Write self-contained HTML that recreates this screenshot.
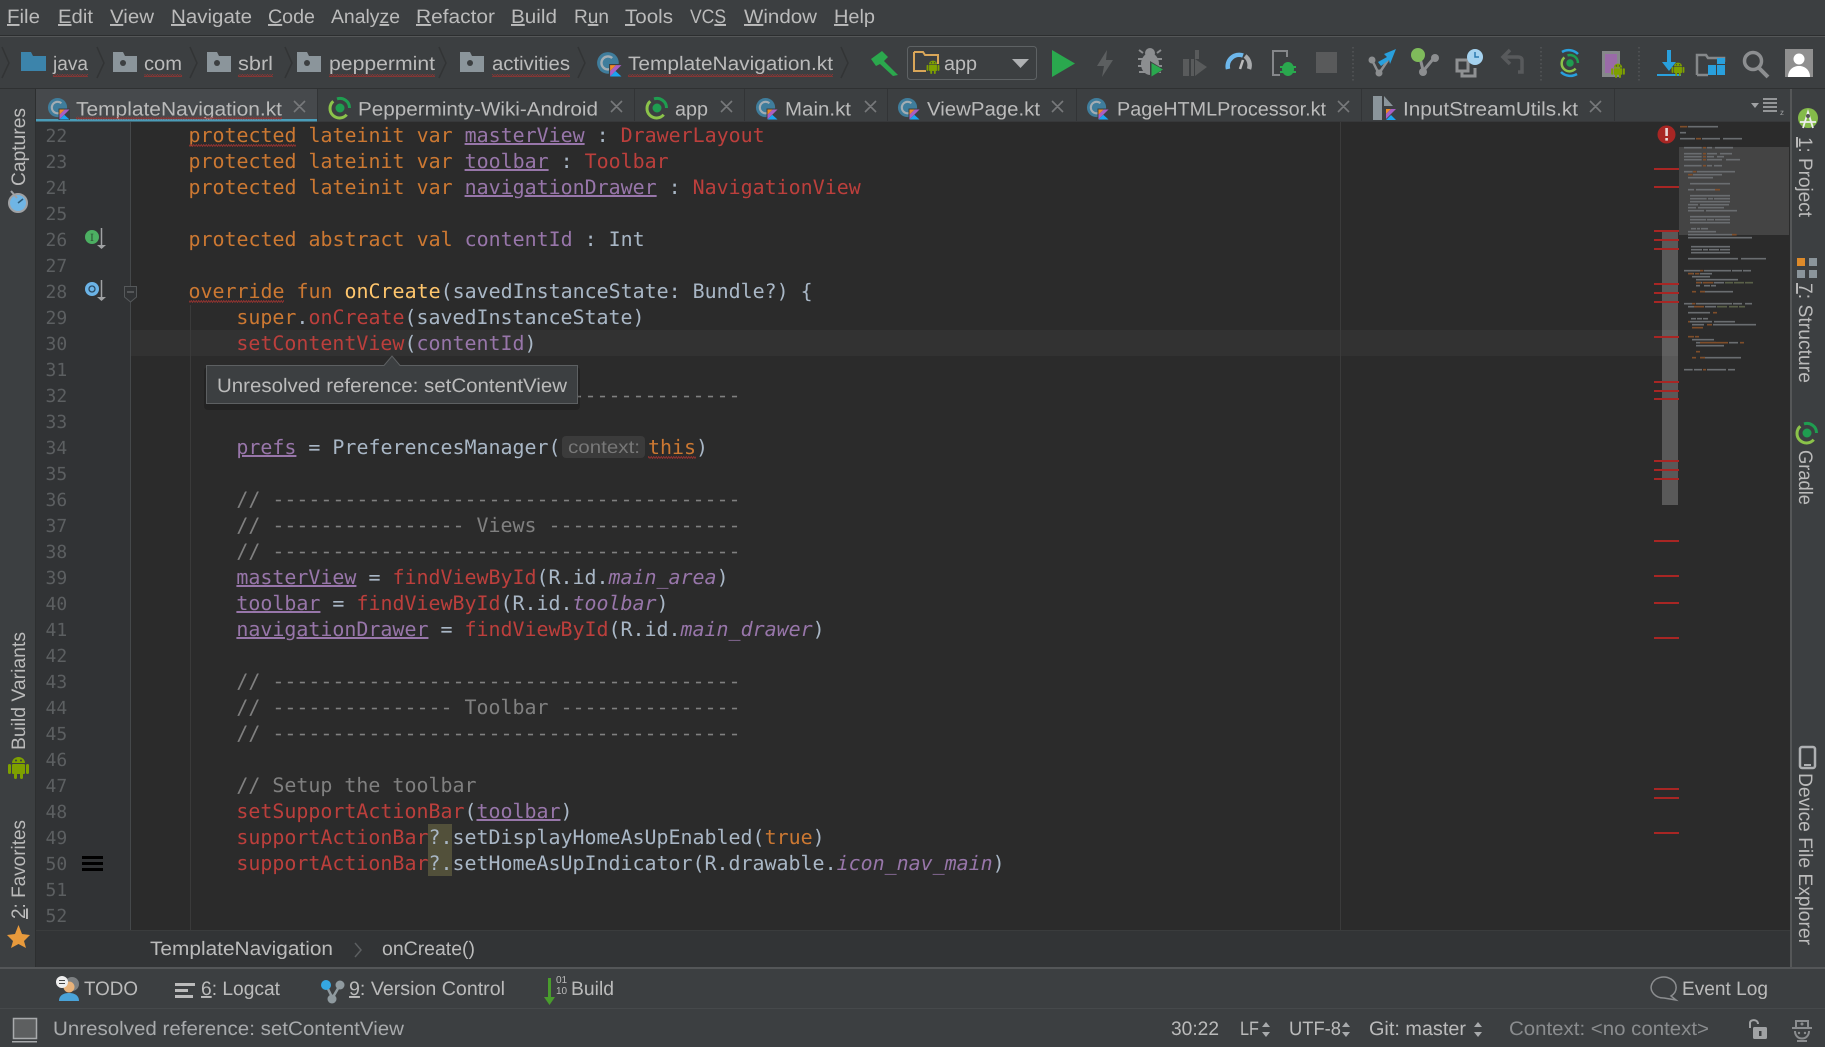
<!DOCTYPE html>
<html><head><meta charset="utf-8"><title>TemplateNavigation.kt</title>
<style>
html,body{margin:0;padding:0;background:#3c3f41;overflow:hidden;width:1825px;height:1047px}
svg{display:block;text-rendering:geometricPrecision}
.u{font-family:"Liberation Sans",sans-serif;font-size:19.5px;fill:#bbbbbb}
.c{font-family:"DejaVu Sans Mono","Liberation Mono",monospace;font-size:19.95px;fill:#a9b7c6}
.n{font-family:"DejaVu Sans Mono","Liberation Mono",monospace;font-size:18px;fill:#5c5f61}
.k{fill:#cc7832}.p{fill:#9876aa}.r{fill:#bc3f3c}.f{fill:#ffc66d}.m{fill:#808080}
.i{font-style:italic;fill:#9876aa}.ul{text-decoration:underline}
.x{stroke:#77797b;stroke-width:1.6;fill:none}
</style></head><body>
<svg xmlns="http://www.w3.org/2000/svg" width="1825" height="1047" viewBox="0 0 1825 1047">
<defs>
<pattern id="wave" width="5" height="3" patternUnits="userSpaceOnUse"><path d="M0 2.500L1.250 .5 2.500 2.500 3.750 .5 5 2.500" fill="none" stroke="#9c3330" stroke-width=".8"/></pattern>
<symbol id="kt" viewBox="0 0 24 24"><circle cx="11" cy="11" r="10" fill="#3f7d9c"/><path d="M15 6.500A6 6 0 1 0 15 15.500" fill="none" stroke="#a3adb3" stroke-width="2.200"/><rect x="12" y="12" width="12" height="12" fill="#3c3f41"/><polygon points="13,13 18.500,13 13,18.500" fill="#f08a24"/><polygon points="18.500,13 23.500,13 13,23.500 13,18.500" fill="#a85fc4"/><polygon points="13,23.500 18,18.500 23.500,23.500" fill="#1ba4ef"/></symbol>
<symbol id="gr" viewBox="0 0 24 24"><path d="M18.700 18.700A9.500 9.500 0 1 1 5.300 5.300" fill="none" stroke="#8bc34a" stroke-width="3"/><path d="M9 2.900A9.500 9.500 0 0 1 21.500 12" fill="none" stroke="#1f9d50" stroke-width="3"/><circle cx="12" cy="12" r="4.500" fill="#1f9d50"/></symbol>
<symbol id="fd" viewBox="0 0 24 20"><path d="M0 0H10L12 4H24V20H0Z" fill="#8b959b"/><circle cx="10" cy="11" r="3" fill="#3c3f41"/></symbol>
<symbol id="and" viewBox="0 0 21 23"><rect x="4" y="8" width="13" height="10" rx="1" fill="#7ea000"/><path d="M4 7a6.500 6 0 0 1 13 0Z" fill="#7ea000"/><rect y="8" width="3" height="10" rx="1.500" fill="#7ea000"/><rect x="18" y="8" width="3" height="10" rx="1.500" fill="#7ea000"/><rect x="6" y="17" width="3" height="6" rx="1.500" fill="#7ea000"/><rect x="12" y="17" width="3" height="6" rx="1.500" fill="#7ea000"/><circle cx="8" cy="4.500" r="1" fill="#3c3f41"/><circle cx="13" cy="4.500" r="1" fill="#3c3f41"/></symbol>
</defs>

<!-- base -->
<rect width="1825" height="1047" fill="#3c3f41"/>

<!-- menu -->
<g>
<text class="u" x="7" y="23" textLength="33" lengthAdjust="spacingAndGlyphs"><tspan class="ul">F</tspan>ile</text>
<text class="u" x="58" y="23" textLength="35" lengthAdjust="spacingAndGlyphs"><tspan class="ul">E</tspan>dit</text>
<text class="u" x="110" y="23" textLength="44" lengthAdjust="spacingAndGlyphs"><tspan class="ul">V</tspan>iew</text>
<text class="u" x="171" y="23" textLength="81" lengthAdjust="spacingAndGlyphs"><tspan class="ul">N</tspan>avigate</text>
<text class="u" x="268" y="23" textLength="47" lengthAdjust="spacingAndGlyphs"><tspan class="ul">C</tspan>ode</text>
<text class="u" x="331" y="23" textLength="69" lengthAdjust="spacingAndGlyphs">Analy<tspan class="ul">z</tspan>e</text>
<text class="u" x="416" y="23" textLength="79" lengthAdjust="spacingAndGlyphs"><tspan class="ul">R</tspan>efactor</text>
<text class="u" x="511" y="23" textLength="46" lengthAdjust="spacingAndGlyphs"><tspan class="ul">B</tspan>uild</text>
<text class="u" x="574" y="23" textLength="35" lengthAdjust="spacingAndGlyphs">R<tspan class="ul">u</tspan>n</text>
<text class="u" x="625" y="23" textLength="48" lengthAdjust="spacingAndGlyphs"><tspan class="ul">T</tspan>ools</text>
<text class="u" x="690" y="23" textLength="36" lengthAdjust="spacingAndGlyphs">VC<tspan class="ul">S</tspan></text>
<text class="u" x="744" y="23" textLength="73" lengthAdjust="spacingAndGlyphs"><tspan class="ul">W</tspan>indow</text>
<text class="u" x="834" y="23" textLength="41" lengthAdjust="spacingAndGlyphs"><tspan class="ul">H</tspan>elp</text>
</g>
<rect y="35" width="1825" height="1" fill="#2c2e2f"/><rect y="36" width="1825" height="1" fill="#555758"/>

<!-- nav bar -->
<g fill="none" stroke="#323435" stroke-width="1.500">
<path d="M2 47L9 63 2 78M97 47L104 63 97 78M190 47L197 63 190 78M285 47L292 63 285 78M439 47L446 63 439 78M578 47L585 63 578 78M841 47L848 63 841 78"/>
</g>
<path d="M21 52H31L33 56H46V71H21Z" fill="#3c84ab"/>
<use href="#fd" x="113" y="52" width="24" height="20"/><use href="#fd" x="207" y="52" width="24" height="20"/><use href="#fd" x="297" y="52" width="24" height="20"/><use href="#fd" x="460" y="52" width="24" height="20"/>
<use href="#kt" x="596" y="51" width="26" height="26"/>
<text class="u" x="53" y="70" textLength="35" lengthAdjust="spacingAndGlyphs">java</text>
<text class="u" x="144" y="70" textLength="38" lengthAdjust="spacingAndGlyphs">com</text>
<text class="u" x="238" y="70" textLength="35" lengthAdjust="spacingAndGlyphs">sbrl</text>
<text class="u" x="329" y="70" textLength="106" lengthAdjust="spacingAndGlyphs">peppermint</text>
<text class="u" x="492" y="70" textLength="78" lengthAdjust="spacingAndGlyphs">activities</text>
<text class="u" x="628" y="70" textLength="205" lengthAdjust="spacingAndGlyphs">TemplateNavigation.kt</text>
<g fill="url(#wave)"><rect x="53" y="74" width="35" height="3"/><rect x="144" y="74" width="38" height="3"/><rect x="238" y="74" width="35" height="3"/><rect x="329" y="74" width="106" height="3"/><rect x="492" y="74" width="78" height="3"/><rect x="628" y="74" width="205" height="3"/></g>

<!-- toolbar icons -->
<path d="M871 59L882 51 888 57 884 61 898 75 893 76 880 64 876 66Z" fill="#2ba84d"/>
<rect x="907.500" y="46.500" width="129" height="33" rx="3" fill="#3c3f41" stroke="#5e6264"/>
<path d="M914 52H923L925 55H938V64M926 71H914V52" fill="none" stroke="#d9a659" stroke-width="2"/>
<use href="#and" x="926" y="60" width="14" height="14"/>
<text class="u" x="944" y="70" textLength="33" lengthAdjust="spacingAndGlyphs">app</text>
<polygon points="1012,59 1029,59 1020.500,68" fill="#aeb0b2"/>
<polygon points="1052,50 1075,63.500 1052,77" fill="#2aa84e"/>
<polygon points="1107,50 1097,66 1104,66 1102,77 1113,60 1106,60" fill="#5c5f60"/>
<g fill="#8c8e90"><ellipse cx="1150" cy="64" rx="9" ry="11"/><circle cx="1150" cy="53" r="5"/><path d="M1139 50l4 3M1161 50l-4 3" stroke="#8c8e90" stroke-width="2"/><path d="M1138 58h24v2h-24zM1138 65h24v2h-24zM1139 71h22v2h-22z"/></g>
<polygon points="1150,61 1150,78 1164,69.500" fill="#3c3f41"/><polygon points="1151.500,63 1151.500,76.500 1163,69.500" fill="#2aa84e"/>
<g fill="#595b5c"><rect x="1183" y="59" width="6" height="17"/><rect x="1191" y="59" width="3" height="17"/><rect x="1195" y="50" width="4" height="9"/><polygon points="1195,59 1207,67 1195,76"/></g>
<path d="M1228 69A11.500 11.500 0 0 1 1243 55.500" fill="none" stroke="#6db7eb" stroke-width="4.500"/><path d="M1245 56A11.500 11.500 0 0 1 1249 69" fill="none" stroke="#a8aaac" stroke-width="4.500"/><path d="M1240 69L1243 60" stroke="#bbb" stroke-width="2.500"/>
<path d="M1287 57V51H1273V75H1280" fill="none" stroke="#85878a" stroke-width="2"/><ellipse cx="1288" cy="69" rx="6" ry="7" fill="#2aa84e"/><path d="M1280 66h16v2h-16zM1280 71h16v2h-16z" fill="#2aa84e"/>
<rect x="1316" y="52" width="21" height="21" fill="#595a5b"/>
<path d="M1353 47V83M1541 47V83M1639 47V83" stroke="#606264" stroke-width="1" stroke-dasharray="1.500 2.500"/>
<g stroke="#8c8e90" stroke-width="2.500" fill="none"><path d="M1372 60L1378 72M1388 60L1380 72"/></g><circle cx="1372" cy="60" r="3.500" fill="#8c8e90"/><circle cx="1379" cy="73" r="3.500" fill="#8c8e90"/><path d="M1396 49L1384 54 1387 57 1378 62 1381 66 1389 60 1390 64Z" fill="#29a0dd"/>
<g stroke="#8c8e90" stroke-width="3" fill="none"><path d="M1420 58L1423 70M1434 58L1424 70"/></g><circle cx="1418" cy="55" r="7" fill="#7fbb5b"/><circle cx="1435" cy="58" r="4" fill="#8c8e90"/><circle cx="1423" cy="72" r="4" fill="#8c8e90"/>
<g fill="none" stroke="#8f9193" stroke-width="3"><path d="M1472 60H1457V71H1468V60M1462 71V76H1475V68"/></g><circle cx="1475" cy="57" r="8" fill="#a5d2ef"/><path d="M1475 52V57H1479" stroke="#2c7bb0" stroke-width="1.500" fill="none"/>
<path d="M1518 72H1522V60C1522 58 1520 57 1518 57H1505M1510 50L1503 57 1510 64" fill="none" stroke="#585a5c" stroke-width="3.500"/>
<path d="M1562 52A13 13 0 0 1 1578 54M1577 74A13 13 0 0 1 1561 72" stroke="#29a0dd" stroke-width="2.500" fill="none"/><use href="#gr" x="1560" y="53" width="20" height="20"/>
<rect x="1602" y="51" width="18" height="26" fill="#86888a"/><rect x="1605" y="54" width="12" height="19" fill="#9a6ba8"/><use href="#and" x="1611" y="63" width="14" height="15"/>
<rect x="1667" y="50" width="4" height="14" fill="#29a0dd"/><polygon points="1662,62 1676,62 1669,71" fill="#29a0dd"/><rect x="1657" y="74" width="24" height="2" fill="#29a0dd"/><use href="#and" x="1671" y="62" width="14" height="14"/>
<path d="M1697 75V55H1706L1708 58H1724V62" fill="none" stroke="#85888a" stroke-width="2.500"/><path d="M1697 75H1708" stroke="#85888a" stroke-width="2.500"/><rect x="1717" y="58" width="8" height="6" fill="#29a0dd"/><rect x="1708" y="65" width="8" height="10" fill="#29a0dd"/><rect x="1717" y="65" width="8" height="10" fill="#29a0dd"/>
<circle cx="1753" cy="61" r="8.500" fill="none" stroke="#8c8e90" stroke-width="3.500"/><path d="M1759 68L1768 77" stroke="#8c8e90" stroke-width="4"/>
<rect x="1785" y="49" width="28" height="28" fill="#8f8f8f"/><circle cx="1799" cy="59" r="5.500" fill="#fff"/><path d="M1788 77C1788 70 1793 66 1799 66S1810 70 1810 77Z" fill="#fff"/>

<!-- tabs -->
<rect y="88" width="1825" height="1" fill="#2f3132"/>
<rect x="36" y="89" width="281" height="31" fill="#46494c"/>
<rect x="35" y="119" width="282" height="3" fill="#4a9cb8"/>
<rect x="36" y="121.500" width="1754" height="1" fill="#323232"/>
<g fill="#323436"><rect x="317" y="89" width="1" height="32"/><rect x="634" y="89" width="1" height="32"/><rect x="744" y="89" width="1" height="32"/><rect x="887" y="89" width="1" height="32"/><rect x="1076" y="89" width="1" height="32"/><rect x="1361" y="89" width="1" height="32"/><rect x="1614" y="89" width="1" height="32"/></g>
<use href="#kt" x="47" y="97" width="23" height="23"/><use href="#gr" x="328" y="96" width="24" height="24"/><use href="#gr" x="645" y="96" width="24" height="24"/><use href="#kt" x="755" y="97" width="23" height="23"/><use href="#kt" x="897" y="97" width="23" height="23"/><use href="#kt" x="1086" y="97" width="23" height="23"/>
<path d="M1373 96H1382V120H1373V106ZM1384 96L1393 106H1384Z" fill="#8b959b"/>
<rect x="1385" y="108" width="11" height="12" fill="#3c3f41"/><polygon points="1386,109 1391,109 1386,114" fill="#f08a24"/><polygon points="1391,109 1396,109 1386,119 1386,114" fill="#a85fc4"/><polygon points="1386,120 1391,115 1396,120" fill="#1ba4ef"/>
<text class="u" x="76" y="115.500" textLength="206" lengthAdjust="spacingAndGlyphs">TemplateNavigation.kt</text>
<text class="u" x="358" y="115.500" textLength="240" lengthAdjust="spacingAndGlyphs">Pepperminty-Wiki-Android</text>
<text class="u" x="675" y="115.500" textLength="33" lengthAdjust="spacingAndGlyphs">app</text>
<text class="u" x="785" y="115.500" textLength="66" lengthAdjust="spacingAndGlyphs">Main.kt</text>
<text class="u" x="927" y="115.500" textLength="113" lengthAdjust="spacingAndGlyphs">ViewPage.kt</text>
<text class="u" x="1117" y="115.500" textLength="209" lengthAdjust="spacingAndGlyphs">PageHTMLProcessor.kt</text>
<text class="u" x="1403" y="115.500" textLength="175" lengthAdjust="spacingAndGlyphs">InputStreamUtils.kt</text>
<rect x="76" y="116.500" width="206" height="3" fill="url(#wave)"/>
<path class="x" d="M294 101L305 112M305 101L294 112M611 101L622 112M622 101L611 112M721 101L732 112M732 101L721 112M865 101L876 112M876 101L865 112M1052 101L1063 112M1063 101L1052 112M1338 101L1349 112M1349 101L1338 112M1590 101L1601 112M1601 101L1590 112"/>
<polygon points="1751,103 1759,103 1755,108" fill="#a0a2a4"/>
<path d="M1763 99H1777M1763 103H1777M1763 107H1777M1763 111H1777" stroke="#a0a2a4" stroke-width="1.800"/>
<text x="1780" y="115" font-family="Liberation Sans" font-size="8" fill="#a0a2a4">z</text>

<!-- editor -->
<rect x="36" y="122" width="1754" height="808" fill="#2b2b2b"/>
<rect x="36" y="122" width="95" height="808" fill="#313335"/>
<rect x="35" y="89" width="1" height="878" fill="#2d2f30"/>
<rect x="130" y="122" width="1" height="808" fill="#45484a"/>
<rect x="131" y="330" width="1547" height="26" fill="#323232"/>
<rect x="1340" y="122" width="1" height="808" fill="#3b3b3b"/>
<rect x="190" y="305" width="1" height="625" fill="#3a3a3a"/>
<rect x="428" y="824" width="24" height="52" fill="#52503a"/>

<g class="n">
<text x="45.500" y="142">22</text><text x="45.500" y="168">23</text><text x="45.500" y="194">24</text><text x="45.500" y="220">25</text><text x="45.500" y="246">26</text><text x="45.500" y="272">27</text><text x="45.500" y="298">28</text><text x="45.500" y="324">29</text><text x="45.500" y="350">30</text><text x="45.500" y="376">31</text><text x="45.500" y="402">32</text><text x="45.500" y="428">33</text><text x="45.500" y="454">34</text><text x="45.500" y="480">35</text><text x="45.500" y="506">36</text><text x="45.500" y="532">37</text><text x="45.500" y="558">38</text><text x="45.500" y="584">39</text><text x="45.500" y="610">40</text><text x="45.500" y="636">41</text><text x="45.500" y="662">42</text><text x="45.500" y="688">43</text><text x="45.500" y="714">44</text><text x="45.500" y="740">45</text><text x="45.500" y="766">46</text><text x="45.500" y="792">47</text><text x="45.500" y="818">48</text><text x="45.500" y="844">49</text><text x="45.500" y="870">50</text><text x="45.500" y="896">51</text><text x="45.500" y="922">52</text>
</g>

<circle cx="92" cy="237" r="7" fill="#4caf62"/><text x="92" y="241" font-family="DejaVu Serif,Liberation Serif,serif" font-size="10" fill="#2b4a32" text-anchor="middle">I</text>
<path d="M101.500 228V246" stroke="#a0a2a4" stroke-width="1.500"/><polygon points="97,245 106,245 101.500,249" fill="#a0a2a4"/>
<circle cx="92" cy="289" r="7" fill="#6bb3e6"/><circle cx="92" cy="289" r="3" fill="none" stroke="#2b4a62" stroke-width="1.300"/>
<path d="M101.500 280V298" stroke="#a0a2a4" stroke-width="1.500"/><polygon points="97,297 106,297 101.500,301" fill="#a0a2a4"/>
<path d="M124.500 286.500H136.500V297L130.500 302 124.500 297Z" fill="#313335" stroke="#55585a"/><path d="M127 292H134" stroke="#77797b"/>
<rect x="82" y="856" width="21" height="3" fill="#000"/><rect x="82" y="862" width="21" height="3" fill="#000"/><rect x="82" y="868" width="21" height="3" fill="#000"/>

<g class="c">
<text x="188.500" y="142"><tspan class="k">protected lateinit var </tspan><tspan class="p ul">masterView</tspan> : <tspan class="r">DrawerLayout</tspan></text>
<text x="188.500" y="168"><tspan class="k">protected lateinit var </tspan><tspan class="p ul">toolbar</tspan> : <tspan class="r">Toolbar</tspan></text>
<text x="188.500" y="194"><tspan class="k">protected lateinit var </tspan><tspan class="p ul">navigationDrawer</tspan> : <tspan class="r">NavigationView</tspan></text>
<text x="188.500" y="246"><tspan class="k">protected abstract val </tspan><tspan class="p">contentId</tspan> : Int</text>
<text x="188.500" y="298"><tspan class="k">override fun </tspan><tspan class="f">onCreate</tspan>(savedInstanceState: Bundle?) {</text>
<text x="236.400" y="324"><tspan class="k">super</tspan>.<tspan class="r">onCreate</tspan>(savedInstanceState)</text>
<text x="236.400" y="350"><tspan class="r">setContentView</tspan>(<tspan class="p">contentId</tspan>)</text>
<text x="236.400" y="402"><tspan class="m">// ---------------------------------------</tspan></text>
<text x="236.400" y="454"><tspan class="p ul">prefs</tspan> = PreferencesManager(</text>
<text x="236.400" y="506"><tspan class="m">// ---------------------------------------</tspan></text>
<text x="236.400" y="532"><tspan class="m">// ---------------- Views ----------------</tspan></text>
<text x="236.400" y="558"><tspan class="m">// ---------------------------------------</tspan></text>
<text x="236.400" y="584"><tspan class="p ul">masterView</tspan> = <tspan class="r">findViewById</tspan>(R.id.<tspan class="i">main_area</tspan>)</text>
<text x="236.400" y="610"><tspan class="p ul">toolbar</tspan> = <tspan class="r">findViewById</tspan>(R.id.<tspan class="i">toolbar</tspan>)</text>
<text x="236.400" y="636"><tspan class="p ul">navigationDrawer</tspan> = <tspan class="r">findViewById</tspan>(R.id.<tspan class="i">main_drawer</tspan>)</text>
<text x="236.400" y="688"><tspan class="m">// ---------------------------------------</tspan></text>
<text x="236.400" y="714"><tspan class="m">// --------------- Toolbar ---------------</tspan></text>
<text x="236.400" y="740"><tspan class="m">// ---------------------------------------</tspan></text>
<text x="236.400" y="792"><tspan class="m">// Setup the toolbar</tspan></text>
<text x="236.400" y="818"><tspan class="r">setSupportActionBar</tspan>(<tspan class="p ul">toolbar</tspan>)</text>
<text x="236.400" y="844"><tspan class="r">supportActionBar</tspan>?.setDisplayHomeAsUpEnabled(<tspan class="k">true</tspan>)</text>
<text x="236.400" y="870"><tspan class="r">supportActionBar</tspan>?.setHomeAsUpIndicator(R.drawable.<tspan class="i">icon_nav_main</tspan>)</text>
</g>
<rect x="189" y="144" width="107" height="3" fill="url(#wave)"/>
<rect x="189" y="300" width="95" height="3" fill="url(#wave)"/>
<rect x="562" y="436" width="83" height="22" rx="4" fill="#3b3b3b"/>
<text class="u" x="568" y="453" textLength="72" lengthAdjust="spacingAndGlyphs" style="font-size:18px;fill:#787878">context:</text>
<text class="c" x="648" y="454"><tspan class="k">this</tspan>)</text>
<rect x="648" y="456" width="48" height="3" fill="url(#wave)"/>

<!-- tooltip -->
<rect x="204" y="367" width="376" height="43" fill="#000" opacity=".18" rx="4"/>
<path d="M206.500 365.500H384L392 356 400 365.500H577.500V403.500H206.500Z" fill="#3c3f41" stroke="#5d6062"/>
<text class="u" x="217" y="392" textLength="350" lengthAdjust="spacingAndGlyphs">Unresolved reference: setContentView</text>

<!-- scrollbar + minimap -->
<rect x="1679" y="147" width="110" height="88" fill="#444444"/>
<rect x="1662" y="232" width="16" height="273" fill="#595959"/>
<rect x="1662" y="330" width="16" height="26" fill="#5f5f5f"/>
<g fill="#a82624">
<rect x="1654" y="168" width="25" height="2"/><rect x="1654" y="186" width="25" height="2"/><rect x="1654" y="230" width="25" height="2"/><rect x="1654" y="239" width="25" height="2"/><rect x="1654" y="248" width="25" height="2"/><rect x="1654" y="283" width="25" height="2"/><rect x="1654" y="292" width="25" height="2"/><rect x="1654" y="301" width="25" height="2"/><rect x="1654" y="336" width="25" height="2"/><rect x="1654" y="381" width="25" height="2"/><rect x="1654" y="390" width="25" height="2"/><rect x="1654" y="398" width="25" height="2"/><rect x="1654" y="460" width="25" height="2"/><rect x="1654" y="469" width="25" height="2"/><rect x="1654" y="478" width="25" height="2"/><rect x="1654" y="540" width="25" height="2"/><rect x="1654" y="575" width="25" height="2"/><rect x="1654" y="602" width="25" height="2"/><rect x="1654" y="637" width="25" height="2"/><rect x="1654" y="788" width="25" height="2"/><rect x="1654" y="797" width="25" height="2"/><rect x="1654" y="832" width="25" height="2"/>
</g>
<circle cx="1666.500" cy="134.500" r="9" fill="#a82624"/><rect x="1665.300" y="128" width="2.600" height="8" fill="#e8d8d8"/><rect x="1665.300" y="138" width="2.600" height="2.600" fill="#e8d8d8"/>
<g transform="translate(1620,100) scale(.33333)">
<path stroke="#6a6d70" stroke-width="5" d="M204 80H294M180 98H198M180 116H225M246 116H300M309 116H366M192 143H245M261 143H276M285 143H339M192 161H245M261 161H291M300 161H336M192 170H245M261 170H282M291 170H312M192 179H245M261 179H306M318 179H360M192 197H245M261 197H276M282 197H306M192 215H218M231 215H345M219 224H306M204 233H279M210 251H330M204 269H222M228 269H285M210 287H330M210 296H260M264 296H279M282 296H330M210 305H330M204 314H234M240 314H327M204 323H228M234 323H312M204 332H252M258 332H351M210 350H330M210 359H258M261 359H282M285 359H330M210 368H330M213 386H228M231 386H240M243 386H264M204 395H288M204 404H336M204 413H396M213 440H330M213 449H246M249 449H264M267 449H297M300 449H330M213 458H330M204 476H354M363 476H438M192 512H240M252 512H333M336 512H366M369 512H393M204 521H222M240 521H276M216 530H270M228 539H354M228 548H246M282 548H312M228 557H240M252 557H270M273 557H288M240 575H339M192 611H216M228 611H336M339 611H366M375 611H396M204 620H222M255 620H288M204 638H270M213 656H228M231 656H246M249 656H264M210 665H276M282 665H345M216 674H252M279 674H408M216 719H282M228 728H282M240 728H288M327 728H354M228 737H312M240 773H363M192 809H218M222 809H246M261 809H318M324 809H345"/>
<path stroke="#7f4e2a" stroke-width="5" d="M180 80H202M228 116H243M249 143H258M249 161H258M249 170H258M249 179H258M249 197H258M219 215H229M204 224H218M285 269H300M336 404H350M240 512H250M204 521H220M225 521H238M228 548H243M248 548H280M216 575H228M240 575H255M216 611H226M222 620H252M279 638H291M204 665H210M261 674H276M216 683H249M204 710H222M225 710H237M240 728H324M360 728H372M228 755H240M216 773H228M240 773H255M249 809H258"/>
<path stroke="#5a6048" stroke-width="5" d="M315 548H339M342 548H372M375 548H399M291 620H321M327 620H354M357 620H375"/>
</g>

<!-- breadcrumb bar -->
<rect x="36" y="930" width="1754" height="37" fill="#323436"/>
<rect x="36" y="930" width="1754" height="1" fill="#3a3c3d"/>
<text class="u" x="150" y="955" textLength="183" lengthAdjust="spacingAndGlyphs">TemplateNavigation</text>
<path d="M355 943L361 950 355 957" fill="none" stroke="#5c5f61" stroke-width="1.500"/>
<text class="u" x="382" y="955" textLength="93" lengthAdjust="spacingAndGlyphs">onCreate()</text>

<!-- left bar -->
<g>
<text class="u" transform="translate(25,186) rotate(-90)" textLength="78" lengthAdjust="spacingAndGlyphs">Captures</text>
<text class="u" transform="translate(25,750) rotate(-90)" textLength="118" lengthAdjust="spacingAndGlyphs">Build Variants</text>
<text class="u" transform="translate(25,919) rotate(-90)" textLength="99" lengthAdjust="spacingAndGlyphs"><tspan class="ul">2</tspan>: Favorites</text>
</g>
<circle cx="18" cy="203" r="9" fill="#6fb5e5" stroke="#a0a2a4" stroke-width="2"/><path d="M11 191L17 198" stroke="#a0a2a4" stroke-width="2"/><path d="M18 203L23 199" stroke="#2c5a78" stroke-width="1.500"/>
<use href="#and" x="8" y="756" width="21" height="23"/>
<polygon points="18.500,925 22,934 30,935 24,941 26,948 18.500,944 11,948 13,941 7,935 15,934" fill="#e89a3c"/>

<!-- right bar -->
<rect x="1790" y="89" width="2" height="878" fill="#555758"/>
<circle cx="1808" cy="118" r="10" fill="#84bb4a"/><path d="M1803 128L1808 112 1813 128M1800 122H1816" stroke="#eee" stroke-width="1.800" fill="none"/><circle cx="1808" cy="116" r="2" fill="#555"/>
<text class="u" transform="translate(1799,137) rotate(90)" textLength="80" lengthAdjust="spacingAndGlyphs"><tspan class="ul">1</tspan>: Project</text>
<rect x="1797" y="258" width="8" height="8" fill="#dd8a2a"/><rect x="1809" y="258" width="8" height="8" fill="#8b959b"/><rect x="1797" y="270" width="8" height="8" fill="#8b959b"/><rect x="1809" y="270" width="8" height="8" fill="#8b959b"/>
<text class="u" transform="translate(1799,283) rotate(90)" textLength="100" lengthAdjust="spacingAndGlyphs"><tspan class="ul">7</tspan>: Structure</text>
<use href="#gr" x="1795" y="421" width="24" height="24"/>
<text class="u" transform="translate(1799,450) rotate(90)" textLength="55" lengthAdjust="spacingAndGlyphs">Gradle</text>
<rect x="1800" y="747" width="15" height="21" rx="2" fill="none" stroke="#aeb0b2" stroke-width="2.500"/><rect x="1804" y="764" width="7" height="2" fill="#aeb0b2"/>
<text class="u" transform="translate(1799,773) rotate(90)" textLength="172" lengthAdjust="spacingAndGlyphs">Device File Explorer</text>

<!-- tool window bar -->
<rect y="967" width="1825" height="2" fill="#545658"/>
<rect y="1008" width="1825" height="1" fill="#46494b"/>
<circle cx="72" cy="984" r="7" fill="#7d8082"/><circle cx="69" cy="987" r="5.500" fill="#e8b27a"/><path d="M59 1001C59 995 64 993 69 993S79 995 79 1001Z" fill="#4aa3d8"/><circle cx="62" cy="982" r="6" fill="#eee"/><path d="M59 980.500H65M59 983.500H65" stroke="#444" stroke-width="1"/>
<text class="u" x="84" y="995" textLength="54" lengthAdjust="spacingAndGlyphs">TODO</text>
<rect x="175" y="983" width="20" height="3" fill="#bbb"/><rect x="175" y="989" width="13" height="3" fill="#bbb"/><rect x="175" y="995" width="18" height="3" fill="#bbb"/>
<text class="u" x="201" y="995" textLength="79" lengthAdjust="spacingAndGlyphs"><tspan class="ul">6</tspan>: Logcat</text>
<path d="M326 985L332 997M340 985L333 997" stroke="#8f9a9f" stroke-width="2.500" fill="none"/><circle cx="326" cy="985" r="5" fill="#35a7e2"/><circle cx="340" cy="985" r="4.500" fill="#8f9a9f"/><circle cx="332" cy="999" r="4.500" fill="#8f9a9f"/>
<text class="u" x="349" y="995" textLength="156" lengthAdjust="spacingAndGlyphs"><tspan class="ul">9</tspan>: Version Control</text>
<rect x="548" y="978" width="3" height="22" fill="#499c2d"/><polygon points="544,997 555,997 549.500,1005" fill="#499c2d"/>
<text x="556" y="983" font-family="Liberation Sans,sans-serif" font-size="10" fill="#bbb" textLength="11">01</text><text x="556" y="994" font-family="Liberation Sans,sans-serif" font-size="10" fill="#bbb" textLength="11">10</text>
<text class="u" x="571" y="995" textLength="43" lengthAdjust="spacingAndGlyphs">Build</text>
<path d="M1671 996A12.500 10.500 0 1 0 1664 998L1676 1000Z" fill="none" stroke="#8b8d8f" stroke-width="1.500"/>
<text class="u" x="1682" y="995" textLength="86" lengthAdjust="spacingAndGlyphs">Event Log</text>

<!-- status bar -->
<rect x="13.500" y="1018.500" width="23" height="20" fill="#5d5f60" stroke="#a8aaac" stroke-width="1.500"/><rect x="12" y="1041" width="25" height="1.500" fill="#a8aaac"/>
<text class="u" x="53" y="1035" textLength="351" lengthAdjust="spacingAndGlyphs" style="fill:#a8aaac">Unresolved reference: setContentView</text>
<g>
<text class="u" x="1171" y="1035" textLength="48" lengthAdjust="spacingAndGlyphs">30:22</text>
<text class="u" x="1240" y="1035" textLength="19" lengthAdjust="spacingAndGlyphs">LF</text>
<text class="u" x="1289" y="1035" textLength="52" lengthAdjust="spacingAndGlyphs">UTF-8</text>
<text class="u" x="1369" y="1035" textLength="97" lengthAdjust="spacingAndGlyphs">Git: master</text>
<text class="u" x="1509" y="1035" textLength="200" lengthAdjust="spacingAndGlyphs" style="fill:#8a8c8e">Context: &lt;no context&gt;</text>
</g>
<path d="M1262 1027L1266 1022 1270 1027ZM1262 1032L1266 1037 1270 1032ZM1342 1027L1346 1022 1350 1027ZM1342 1032L1346 1037 1350 1032ZM1474 1027L1478 1022 1482 1027ZM1474 1032L1478 1037 1482 1032Z" fill="#a8aaac"/>
<path d="M1750 1028V1023C1750 1019 1758 1019 1758 1024" fill="none" stroke="#a0a2a4" stroke-width="2"/><rect x="1753" y="1027" width="14" height="12" rx="1.500" fill="#a0a2a4"/><rect x="1759" y="1031" width="2.500" height="5" fill="#3c3f41"/>
<path d="M1796 1021H1808V1028H1796ZM1792 1028H1812M1795 1031C1795 1041 1809 1041 1809 1031M1797 1041H1807" fill="none" stroke="#8b8d8f" stroke-width="2"/><circle cx="1802" cy="1024" r="1.500" fill="#8b8d8f"/><circle cx="1799" cy="1033" r="1.200" fill="#8b8d8f"/><circle cx="1805" cy="1033" r="1.200" fill="#8b8d8f"/>
</svg>
</body></html>
